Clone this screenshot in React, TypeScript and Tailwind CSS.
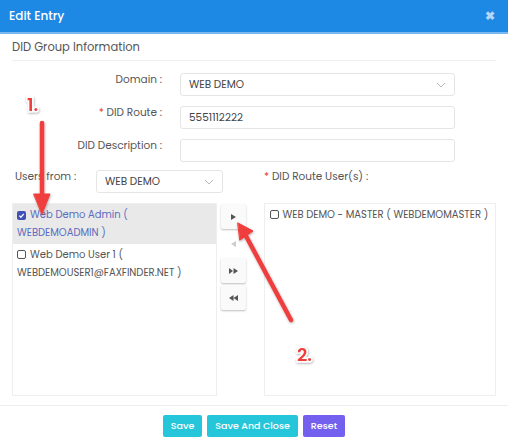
import React from "react";

const font = { fontFamily: '"Poppins", "Open Sans", "Noto Sans", sans-serif' };

function Chevron() {
  return (
    <svg width="10" height="6" viewBox="0 0 10 6" className="shrink-0">
      <path d="M1 1l4 4 4-4" fill="none" stroke="#b8b8b8" strokeWidth="1" />
    </svg>
  );
}

function Box({ checked }: { checked?: boolean }) {
  if (checked)
    return (
      <span className="inline-flex w-[9px] h-[9px] rounded-[2px] bg-[#3f51b5] items-center justify-center mr-[4px] align-[-1px]">
        <svg width="7" height="7" viewBox="0 0 8 8">
          <path d="M1.5 4.2l1.8 1.8 3.3-3.8" fill="none" stroke="#fff" strokeWidth="1.4" />
        </svg>
      </span>
    );
  return <span className="inline-block w-[9px] h-[9px] rounded-[2px] border border-[#555] mr-[4px] align-[-1px]" />;
}

function MoveBtn({ children, ghost }: { children: React.ReactNode; ghost?: boolean }) {
  return (
    <div
      className={
        "w-[25px] h-[25px] flex items-center justify-center rounded-[2px] " +
        (ghost ? "text-[#ccc]" : "bg-[#fafafa] shadow-[0_1px_2px_rgba(0,0,0,0.25)] text-[#555]")
      }
    >
      {children}
    </div>
  );
}

export default function App() {
  return (
    <div className="w-[508px] h-[445px] bg-white overflow-hidden relative flex flex-col" style={font}>
      {/* header */}
      <div className="h-[34px] bg-[#1e88e5] border-b-[2px] border-[#7ab8f0] flex items-center justify-between pl-[9px] pr-[13px] shrink-0">
        <span className="text-white text-[12px] font-medium">Edit Entry</span>
        <span className="text-[#b5d6f6] text-[12px] font-bold leading-none">✖</span>
      </div>

      <div className="px-[12px] pt-[2px]">
        <div className="text-[11.5px] text-[#555] h-[25px] flex items-center border-b border-[#eeeeee]">DID Group Information</div>
      </div>

      {/* form rows */}
      <div className="flex flex-col gap-[10px] mt-[12px]">
        <div className="flex items-start">
          <div className="w-[162px] text-right text-[10.5px] text-[#555] leading-[14px]">Domain :</div>
          <div className="ml-[18px] w-[275px] h-[23px] border border-[#e5e5e5] rounded-[3px] flex items-center justify-between pl-[8px] pr-[8px] text-[10.5px] text-[#444]">
            <span>WEB DEMO</span>
            <Chevron />
          </div>
        </div>
        <div className="flex items-start">
          <div className="w-[162px] text-right text-[10.5px] text-[#555] leading-[14px]">
            <span className="text-[#e53935]">* </span>DID Route :
          </div>
          <div className="ml-[18px] w-[275px] h-[23px] border border-[#e5e5e5] rounded-[3px] flex items-center pl-[8px] text-[10.5px] text-[#444]">
            5551112222
          </div>
        </div>
        <div className="flex items-start">
          <div className="w-[162px] text-right text-[10.5px] text-[#555] leading-[14px]">DID Description :</div>
          <div className="ml-[18px] w-[275px] h-[23px] border border-[#e5e5e5] rounded-[3px]" />
        </div>
      </div>

      <div className="flex items-start mt-[8px] pl-[15px]">
        <div className="text-[10.5px] text-[#555] leading-[14px] w-[81px]">Users from :</div>
        <div className="w-[127px] h-[23px] border border-[#e5e5e5] rounded-[3px] flex items-center justify-between pl-[8px] pr-[8px] text-[10.5px] text-[#444]">
          <span>WEB DEMO</span>
          <Chevron />
        </div>
        <div className="ml-[41px] text-[10.5px] text-[#555] leading-[14px]">
          <span className="text-[#e53935]">* </span>DID Route User(s) :
        </div>
      </div>

      {/* lists */}
      <div className="flex items-start mt-[10px] px-[12px]">
        <div className="w-[205px] h-[193px] border border-[#eeeeee] text-[10px] leading-[18px]">
          <div className="bg-[#e9e9e9] text-[#5c6bc0] pl-[4px] pt-[2px] pb-[2px]">
            <Box checked />Web Demo Admin (
            <br />
            WEBDEMOADMIN )
          </div>
          <div className="text-[#555] pl-[4px] pt-[2px]">
            <Box />Web Demo User 1 (
            <br />
            WEBDEMOUSER1@FAXFINDER.NET )
          </div>
        </div>
        <div className="ml-[4px] mt-[1px] flex flex-col gap-[2px]">
          <MoveBtn>
            <svg width="5" height="6" viewBox="0 0 5 6"><path d="M0 0l5 3-5 3z" fill="#555" /></svg>
          </MoveBtn>
          <MoveBtn ghost>
            <svg width="5" height="6" viewBox="0 0 5 6"><path d="M5 0L0 3l5 3z" fill="#ccc" /></svg>
          </MoveBtn>
          <MoveBtn>
            <svg width="9" height="6" viewBox="0 0 9 6"><path d="M0 0l4 3-4 3zM4.5 0l4.5 3-4.5 3z" fill="#555" /></svg>
          </MoveBtn>
          <MoveBtn>
            <svg width="9" height="6" viewBox="0 0 9 6"><path d="M4.5 0L0 3l4.5 3zM9 0L4.5 3 9 6z" fill="#555" /></svg>
          </MoveBtn>
        </div>
        <div className="ml-[18px] w-[233px] h-[193px] border border-[#eeeeee] text-[10px] leading-[18px] text-[#555] pl-[5px] pt-[2px]">
          <Box />WEB DEMO - MASTER ( WEBDEMOMASTER )
        </div>
      </div>

      <div className="mt-[9px] border-t border-[#eeeeee] flex justify-center gap-[5px] pt-[9px]">
        <div className="h-[22px] px-[8px] bg-[#26c6da] rounded-[2px] text-white text-[9.5px] font-medium flex items-center">Save</div>
        <div className="h-[22px] px-[8px] bg-[#26c6da] rounded-[2px] text-white text-[9.5px] font-medium flex items-center">Save And Close</div>
        <div className="h-[22px] px-[8px] bg-[#7460ee] rounded-[2px] text-white text-[9.5px] font-medium flex items-center">Reset</div>
      </div>

      {/* annotations */}
      <svg className="absolute left-0 top-0 pointer-events-none" width="508" height="445" viewBox="0 0 508 445">
        <defs>
          <filter id="sh" x="-20%" y="-20%" width="140%" height="140%">
            <feDropShadow dx="0.5" dy="1" stdDeviation="1" floodColor="#000" floodOpacity="0.35" />
          </filter>
        </defs>
        <g filter="url(#sh)" fill="#f03c3c" stroke="#f03c3c" strokeLinecap="round">
          <line x1="42" y1="123" x2="42" y2="196" strokeWidth="4.5" />
          <path d="M34 194 L50 194 L42 214 Z" strokeWidth="1" strokeLinejoin="round" />
          <line x1="291" y1="320" x2="246" y2="236" strokeWidth="4.5" />
          <path d="M238 223 L253 231 L240 240 Z" strokeWidth="1" strokeLinejoin="round" />
        </g>
        <g style={{ fontFamily: '"Poppins", "Open Sans", sans-serif' }} fontWeight="600" fontSize="18" fill="#f03c3c" stroke="#fff" strokeWidth="3" paintOrder="stroke" filter="url(#sh)">
          <text x="27" y="111">1.</text>
          <text x="297" y="361">2.</text>
        </g>
      </svg>
    </div>
  );
}
